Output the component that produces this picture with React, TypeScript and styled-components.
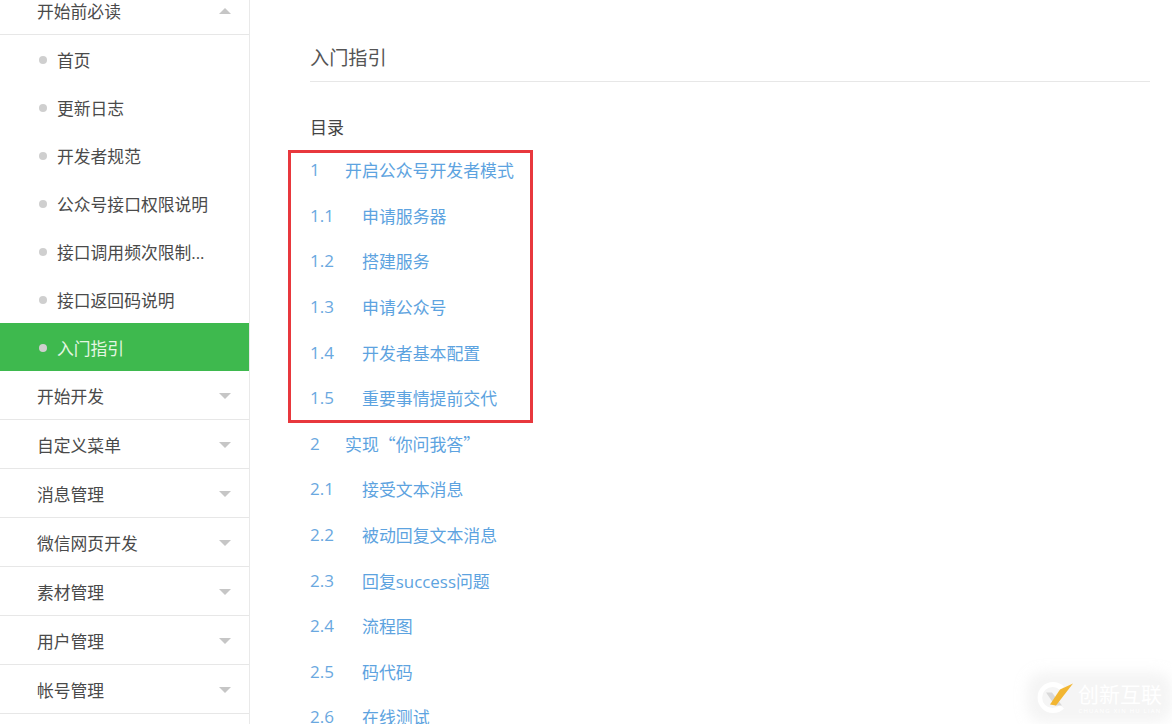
import styled, { createGlobalStyle } from 'styled-components'

const GlobalStyle = createGlobalStyle`
  html, body {
    margin: 0;
    padding: 0;
    height: 100%;
    overflow: hidden;
    background: #fff;
  }
  body {
    font-family: "Open Sans", "Noto Sans CJK SC", sans-serif;
  }
`

const Page = styled.div`
  display: flex;
  width: 1172px;
  height: 724px;
  overflow: hidden;
  position: relative;
`

/* 侧边栏: the first group header is scrolled partly out of view */
const Sidebar = styled.nav`
  flex: none;
  width: 249px;
  height: 780px;
  margin-top: -14px;
  border-right: 1px solid #e9e9e9;
`

const GroupHeader = styled.div`
  box-sizing: border-box;
  height: 49px;
  display: flex;
  align-items: center;
  justify-content: space-between;
  padding: 2px 18px 0 37px;
  border-bottom: 1px solid #e7e7e7;
  font-size: 16.8px;
  color: #4a4a4a;
`

const Arrow = styled.span<{ $open?: boolean }>`
  width: 0;
  height: 0;
  border-left: 6px solid transparent;
  border-right: 6px solid transparent;
  border-top: ${({ $open }) => ($open ? '0' : '6px solid #c6c6c6')};
  border-bottom: ${({ $open }) => ($open ? '6px solid #c6c6c6' : '0')};
`

const SubItem = styled.div<{ $active?: boolean }>`
  box-sizing: border-box;
  height: 48px;
  display: flex;
  align-items: center;
  gap: 10px;
  padding: 1px 0 0 39px;
  font-size: 16.8px;
  color: ${({ $active }) => ($active ? '#e4f6e2' : '#4a4a4a')};
  background: ${({ $active }) => ($active ? '#3eb94e' : 'transparent')};
`

const Bullet = styled.i`
  flex: none;
  width: 8px;
  height: 8px;
  margin-top: 1px;
  border-radius: 50%;
  background: #cfcfcf;
`

const Content = styled.main`
  flex: none;
  width: 840px;
  margin-left: 60px;
  padding-top: 43px;
`

const Title = styled.h1`
  margin: 0;
  height: 38px;
  font-size: 19.2px;
  font-weight: 400;
  line-height: 30px;
  color: #555;
  border-bottom: 1px solid #e7e7e7;
`

const TocTitle = styled.h2`
  margin: 31px 0 0;
  height: 34px;
  font-size: 17px;
  font-weight: 400;
  line-height: 30px;
  color: #444;
`

const TocGroup = styled.div`
  position: relative;
`

const TocRow = styled.div`
  height: 45.6px;
  display: flex;
  align-items: center;
  font-size: 16.9px;
  color: #5da3e0;
`

const TocNumber = styled.span<{ $sub?: boolean }>`
  flex: none;
  width: ${({ $sub }) => ($sub ? '52px' : '35px')};
  font-size: 17px;
  color: #6aa8e0;
`

/* 截图上手动标注的红框 */
const RedBox = styled.div`
  position: absolute;
  left: -22px;
  top: 3px;
  width: 245px;
  height: 273px;
  box-sizing: border-box;
  border: 3px solid #e8383d;
  pointer-events: none;
`

const Quote = styled.span`
  font-family: "Noto Sans CJK SC", sans-serif;
`

const Watermark = styled.div`
  position: absolute;
  right: 8px;
  bottom: 9px;
  display: flex;
  align-items: center;
  gap: 4px;
  padding: 0 2px;
  background: rgba(236, 236, 236, 0.5);
  box-shadow: 0 0 12px 8px rgba(236, 236, 236, 0.5);
  border-radius: 10px;
`

const WatermarkText = styled.div`
  display: flex;
  flex-direction: column;
  align-items: center;
  color: #fff;
  font-size: 21px;
  line-height: 28px;
`

const WatermarkSub = styled.span`
  font-size: 6px;
  line-height: 7px;
  letter-spacing: 1.2px;
  color: #fff;
`

const Logo = () => (
  <svg width="37" height="35" viewBox="0 0 37 34">
    <path
      d="M27 6 A15.5 15.5 0 1 0 27 28 L23 24.5 A10.5 10.5 0 1 1 23 9.5 Z"
      fill="#fff"
    />
    <path d="M9 12 L15 12 L25 25 L18 25 Z" fill="#d9d9d9" />
    <path d="M36 3 L23 9 L13 24 L19 25 Z" fill="#f2b632" />
  </svg>
)

const startItems = ['首页', '更新日志', '开发者规范', '公众号接口权限说明', '接口调用频次限制...', '接口返回码说明']
const groups = ['开始开发', '自定义菜单', '消息管理', '微信网页开发', '素材管理', '用户管理', '帐号管理']

const boxedToc: [string, string][] = [
  ['1', '开启公众号开发者模式'],
  ['1.1', '申请服务器'],
  ['1.2', '搭建服务'],
  ['1.3', '申请公众号'],
  ['1.4', '开发者基本配置'],
  ['1.5', '重要事情提前交代'],
]

const restToc: [string, React.ReactNode][] = [
  ['2', <>实现<Quote>“</Quote>你问我答<Quote>”</Quote></>],
  ['2.1', '接受文本消息'],
  ['2.2', '被动回复文本消息'],
  ['2.3', '回复success问题'],
  ['2.4', '流程图'],
  ['2.5', '码代码'],
  ['2.6', '在线测试'],
]

const renderToc = (rows: [string, React.ReactNode][]) =>
  rows.map(([num, label]) => (
    <TocRow key={num}>
      <TocNumber $sub={num.includes('.')}>{num}</TocNumber>
      <span>{label}</span>
    </TocRow>
  ))

export default function App() {
  return (
    <Page>
      <GlobalStyle />
      <Sidebar>
        <GroupHeader>
          开始前必读
          <Arrow $open />
        </GroupHeader>
        {startItems.map((item) => (
          <SubItem key={item}>
            <Bullet />
            {item}
          </SubItem>
        ))}
        <SubItem $active>
          <Bullet />
          入门指引
        </SubItem>
        {groups.map((group) => (
          <GroupHeader key={group}>
            {group}
            <Arrow />
          </GroupHeader>
        ))}
      </Sidebar>
      <Content>
        <Title>入门指引</Title>
        <TocTitle>目录</TocTitle>
        <TocGroup>
          {renderToc(boxedToc)}
          <RedBox />
        </TocGroup>
        {renderToc(restToc)}
      </Content>
      <Watermark>
        <Logo />
        <WatermarkText>
          创新互联
          <WatermarkSub>CHUANG XIN HU LIAN</WatermarkSub>
        </WatermarkText>
      </Watermark>
    </Page>
  )
}
